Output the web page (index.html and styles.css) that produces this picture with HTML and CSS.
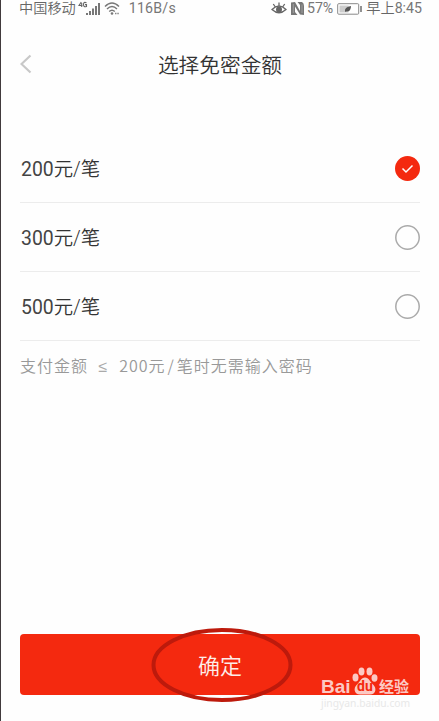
FILE: index.html
```html
<!DOCTYPE html>
<html lang="zh-CN">

<head>
    <meta charset="UTF-8">
    <meta name="viewport" content="width=device-width, initial-scale=1.0">
    <title>选择免密金额</title>
    <link rel="stylesheet" href="styles.css">
</head>

<body>
    <div class="screen">
        <div class="status-bar">
            <div class="status-left">
                <span class="carrier">中国移动</span>
                <svg class="signal" width="24" height="16" viewBox="0 0 24 16">
                    <path d="M3.300 1L1 4.500H4.500M3.700 2V6M8.500 1.800Q5.500 .5 5.500 3.500T8.500 5.500V3.600H7" fill="none" stroke="#666" stroke-width="1.100" />
                    <path d="M8 12h2v2H8zM11 10h2v4h-2zM14 7.500h2V14h-2zM17 5h2v9h-2zM20 2h2v12h-2z" fill="#777" />
                </svg>
                <svg class="wifi" width="17" height="16" viewBox="0 0 17 16">
                    <path d="M1 5.500Q8 -1.500 15 5.500M3 8Q8 3 13 8M5.200 10.500Q8 7.800 10.800 10.500" fill="none" stroke="#777" stroke-width="1.400" />
                    <circle cx="8" cy="12.500" r="1.300" fill="#777" />
                    <path d="M11 12.500h1.500M13.300 12.500h1.500" stroke="#888" stroke-width="1.500" />
                </svg>
                <span class="speed">116B/s</span>
            </div>
            <div class="status-right">
                <svg class="eye" width="16" height="16" viewBox="0 0 16 16">
                    <path d="M1 8.500Q8 1.500 15 8.500Q8 15 1 8.500zM8 4.500V1.500M4 5.500L2.300 3M12 5.500L13.700 3" fill="none" stroke="#666" stroke-width="1.300" />
                    <circle cx="8" cy="8.500" r="3" fill="#666" />
                </svg>
                <svg class="nfc" width="14" height="16" viewBox="0 0 14 16">
                    <path d="M0 1.500L4 1L9 10V4L6.500 1H11Q13 2 13 5V14L9 13.500L4 5.500V11L6.500 14H0z" fill="#777" />
                    <path d="M2.300 3V12M11 3.500V12" stroke="#bbb" stroke-width=".6" />
                </svg>
                <span class="percent">57%</span>
                <svg class="battery" width="26" height="14" viewBox="0 0 26 14">
                    <rect x=".7" y="1.700" width="21" height="10.500" rx="1" fill="#fff" stroke="#888" />
                    <path d="M2.500 3.500h9v7h-9z" fill="#ccc" />
                    <path d="M8 10Q7 5 14 4Q14 10 9 9.500z" fill="#555" />
                    <path d="M24 4v6" stroke="#777" stroke-width="1.600" />
                </svg>
                <span class="clock">早上<span class="time">8:45</span></span>
            </div>
        </div>

        <div class="header">
            <svg class="back" width="14" height="20" viewBox="0 0 14 20">
                <path d="M10.500 1.500L1.500 10L10.500 18.500" fill="none" stroke="#c8c8c8" stroke-width="2.200" />
            </svg>
            <h1 class="title">选择免密金额</h1>
        </div>

        <div class="option-list">
            <div class="option">
                <span class="amount">200<span class="unit">元/笔</span></span>
                <span class="radio checked">
                    <svg width="25" height="25" viewBox="0 0 25 25">
                        <path d="M7.500 12.500L11 16L17.500 9.500" fill="none" stroke="#fff" stroke-width="1.500" />
                    </svg>
                </span>
            </div>
            <div class="option">
                <span class="amount">300<span class="unit">元/笔</span></span>
                <span class="radio">
                    <svg width="25" height="25" viewBox="0 0 25 25">
                        <circle cx="12.500" cy="12.500" r="11.700" fill="none" stroke="#aaa" stroke-width="1.500" />
                    </svg>
                </span>
            </div>
            <div class="option">
                <span class="amount">500<span class="unit">元/笔</span></span>
                <span class="radio">
                    <svg width="25" height="25" viewBox="0 0 25 25">
                        <circle cx="12.500" cy="12.500" r="11.700" fill="none" stroke="#aaa" stroke-width="1.500" />
                    </svg>
                </span>
            </div>
        </div>
        <p class="hint">支付金额 <span class="sign">≤</span> <span class="limit">200</span>元<span class="slash">/</span>笔时无需输入密码</p>

        <div class="footer">
            <button class="confirm" type="button">确定</button>
            <svg class="ring" width="142" height="76" viewBox="0 0 142 76">
                <ellipse cx="71" cy="38" rx="68.500" ry="35" fill="none" stroke="#bd1a0c" stroke-width="4" />
            </svg>
            <div class="watermark">
                <div class="logo">
                    <span class="bai">Bai</span>
                    <span class="paw">
                        <svg width="26" height="28" viewBox="0 0 26 28">
                            <g fill="#fcc9c4">
                                <ellipse cx="3.500" cy="10.500" rx="3" ry="3.900" />
                                <ellipse cx="9.500" cy="4.500" rx="3" ry="4" />
                                <ellipse cx="17.500" cy="4.500" rx="3" ry="4" />
                                <ellipse cx="22.500" cy="11" rx="3" ry="3.700" />
                                <path d="M13 10.500C17 10.500 18 15 21 17.500C25 21 24 27.500 18 27.500H8C2 27.500 1 21 5 17.500C8 15 9 10.500 13 10.500z" />
                            </g>
                        </svg>
                        <span class="du">du</span>
                    </span>
                    <span class="exp">经验</span>
                </div>
                <div class="url">jingyan.baidu.com</div>
            </div>
        </div>
    </div>
</body>

</html>
```

FILE: styles.css
```css
* {
    box-sizing: border-box;
}

body {
    margin: 0;
    background-color: #fefefe;
    font-family: Roboto, "Noto Sans CJK SC", sans-serif;
}

.screen {
    display: flex;
    flex-direction: column;
    height: 721px;
    padding: 0 19px 0 19px;
    border-left: 1px solid #413a3d;
    overflow: hidden;
}

.status-bar {
    display: flex;
    justify-content: space-between;
    height: 17px;
    margin: 0 -2px 0 -1px;
    font-size: 14.2px;
    line-height: 17px;
    color: #777;
    white-space: nowrap;
}

.status-left,
.status-right {
    display: flex;
    align-items: center;
}

.carrier,
.clock {
    font-weight: 350;
    color: #666;
}

.time {
    font-weight: 400;
    color: #777;
}

.signal {
    margin-left: 2px;
}

.wifi {
    margin-left: 2px;
}

.speed {
    margin-left: 8px;
    letter-spacing: 0.2px;
}

.nfc {
    margin-left: 4px;
}

.percent {
    margin-left: 2px;
}

.battery {
    margin: 0 3px 0 4px;
}

.header {
    display: grid;
    grid-template-columns: 14px 1fr 14px;
    align-items: center;
    height: 40px;
    margin-top: 27px;
}

.back {
    margin-top: -1px;
}

.title {
    margin: 0;
    padding-top: 4px;
    font-size: 20.7px;
    font-weight: 350;
    line-height: 30px;
    text-align: center;
    color: #333;
}

.option-list {
    margin-top: 50px;
}

.option {
    display: flex;
    align-items: center;
    justify-content: space-between;
    height: 69px;
    border-bottom: 1px solid #ececec;
}

.amount {
    padding: 0 0 1px 1px;
    font-size: 19.4px;
    color: #444;
}

.unit {
    font-weight: 350;
    color: #333;
}

.radio {
    width: 25px;
    height: 25px;
    border-radius: 50%;
}

.radio.checked {
    background-color: #f4290f;
}

.radio svg {
    display: block;
}

.hint {
    margin: 12px 0 0;
    font-family: "Noto Sans CJK SC", sans-serif;
    font-size: 16px;
    font-weight: 350;
    line-height: 24px;
    letter-spacing: 1px;
    color: #999;
    white-space: nowrap;
}

.sign {
    display: inline-block;
    width: 10px;
    margin: 0 3px 0 6px;
    font-family: "Noto Sans", sans-serif;
    font-weight: 400;
    color: #aaa;
}

.limit {
    margin-left: 3px;
}

.slash {
    margin: 0 2px 0 2px;
}

.footer {
    position: relative;
    margin-top: auto;
    padding-bottom: 26px;
}

.confirm {
    display: block;
    width: 100%;
    height: 61px;
    padding: 0 0 1px;
    border: 0;
    border-radius: 4px;
    background-color: #f4290f;
    font-family: inherit;
    font-size: 22px;
    font-weight: 350;
    color: #fdeeea;
}

/* hand-drawn mark around the button */
.ring {
    position: absolute;
    left: 131px;
    top: -7px;
}

.watermark {
    position: absolute;
    left: 301px;
    top: 33px;
    width: 92px;
}

.logo {
    display: flex;
    align-items: flex-end;
    height: 28px;
    color: #fcc9c4;
    font-weight: 700;
}

.bai {
    width: 31px;
    font-family: "Liberation Sans", sans-serif;
    font-size: 19px;
    line-height: 16px;
}

.paw {
    position: relative;
    width: 26px;
    height: 28px;
}

.du {
    position: absolute;
    left: 5px;
    top: 12px;
    font-size: 14px;
    line-height: 14px;
    color: #f4290f;
}

.exp {
    margin-left: 1px;
    font-size: 15px;
    line-height: 15px;
}

.url {
    margin-top: 2px;
    font-family: "Noto Sans", sans-serif;
    font-size: 10.3px;
    line-height: 13px;
    color: #e8e8e8;
}
```
